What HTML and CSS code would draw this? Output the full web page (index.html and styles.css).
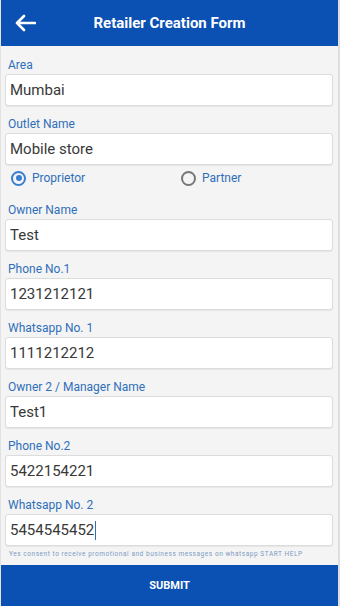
FILE: index.html
```html
<!DOCTYPE html>
<html lang="en">
<head>
    <meta charset="UTF-8">
    <meta name="viewport" content="width=device-width, initial-scale=1.0">
    <title>Retailer Creation Form</title>
    <link rel="stylesheet" href="styles.css">
</head>
<body>
    <div class="app">
        <div class="topbar">
            <svg class="back" width="22" height="18" viewBox="0 0 22 18">
                <path d="M21 9H3M10 2L3 9l7 7" fill="none" stroke="#fff" stroke-width="2.6" stroke-linecap="round" stroke-linejoin="round"/>
            </svg>
            <h1>Retailer Creation Form</h1>
        </div>

        <div class="form">
            <div class="field">
                <label>Area</label>
                <div class="box">Mumbai</div>
            </div>
            <div class="field">
                <label>Outlet Name</label>
                <div class="box">Mobile store</div>
            </div>
            <div class="radios">
                <div class="radio checked"><span class="dot"></span>Proprietor</div>
                <div class="radio"><span class="dot"></span>Partner</div>
            </div>
            <div class="field">
                <label>Owner Name</label>
                <div class="box">Test</div>
            </div>
            <div class="field">
                <label>Phone No.1</label>
                <div class="box">1231212121</div>
            </div>
            <div class="field">
                <label>Whatsapp No. 1</label>
                <div class="box">1111212212</div>
            </div>
            <div class="field">
                <label>Owner 2 / Manager Name</label>
                <div class="box">Test1</div>
            </div>
            <div class="field">
                <label>Phone No.2</label>
                <div class="box">5422154221</div>
            </div>
            <div class="field">
                <label>Whatsapp No. 2</label>
                <div class="box">5454545452<span class="caret"></span></div>
            </div>
            <p class="note">Yes consent to receive promotional and business messages on whatsapp START HELP</p>
        </div>

        <button class="submit">SUBMIT</button>
    </div>
</body>
</html>
```

FILE: styles.css
```css
body {
    margin: 0;
    font-family: Roboto, "Liberation Sans", Arial, sans-serif;
    background-color: #f4f4f4;
}
.app {
    height: 606px;
    display: flex;
    flex-direction: column;
    border-left: 1px solid #e2e2e2;
    border-right: 2px solid #dedede;
    box-sizing: border-box;
}
.topbar {
    height: 46px;
    background: #0b50b3;
    display: flex;
    align-items: center;
    flex-shrink: 0;
}
.back {
    margin-left: 13px;
}
.topbar h1 {
    flex: 1;
    margin: 0 0 0 -35px;
    text-align: center;
    color: #fff;
    font-size: 15px;
    font-weight: bold;
}
.form {
    flex: 1;
    padding: 13px 5px 0 4px;
}
.field {
    margin-bottom: 12px;
}
.field label {
    display: block;
    font-size: 12px;
    line-height: 13px;
    color: #2f6fba;
    margin: 0 0 2px 3px;
}
.box {
    height: 32px;
    box-sizing: border-box;
    background: #fff;
    border: 1px solid #dcdcdc;
    border-radius: 3px;
    box-shadow: 0 1px 1px rgba(0,0,0,0.06);
    padding: 0 4px;
    display: flex;
    align-items: center;
    font-size: 15px;
    color: #383838;
}
.caret {
    display: inline-block;
    width: 1px;
    height: 19px;
    background: #2f6fba;
    margin-left: 1px;
}
.radios {
    display: grid;
    grid-template-columns: 170px 1fr;
    padding-left: 6px;
    height: 24px;
    margin: -11px 0 14px;
}
.radio {
    display: flex;
    align-items: center;
    font-size: 12px;
    color: #2f6fba;
}
.dot {
    width: 15px;
    height: 15px;
    box-sizing: border-box;
    border: 2px solid #777;
    border-radius: 50%;
    margin-right: 6px;
    position: relative;
}
.checked .dot {
    border-color: #3a7ed0;
}
.checked .dot::after {
    content: "";
    position: absolute;
    left: 2.5px;
    top: 2.5px;
    width: 6px;
    height: 6px;
    border-radius: 50%;
    background: #3a7ed0;
}
.note {
    margin: -8px 0 0 4px;
    font-size: 6.5px;
    letter-spacing: 0.55px;
    color: #7d9bc4;
    white-space: nowrap;
}
.submit {
    height: 41px;
    flex-shrink: 0;
    background: #0b50b3;
    color: #fff;
    border: none;
    font-family: Roboto, "Liberation Sans", Arial, sans-serif;
    font-size: 11px;
    font-weight: bold;
}
```
